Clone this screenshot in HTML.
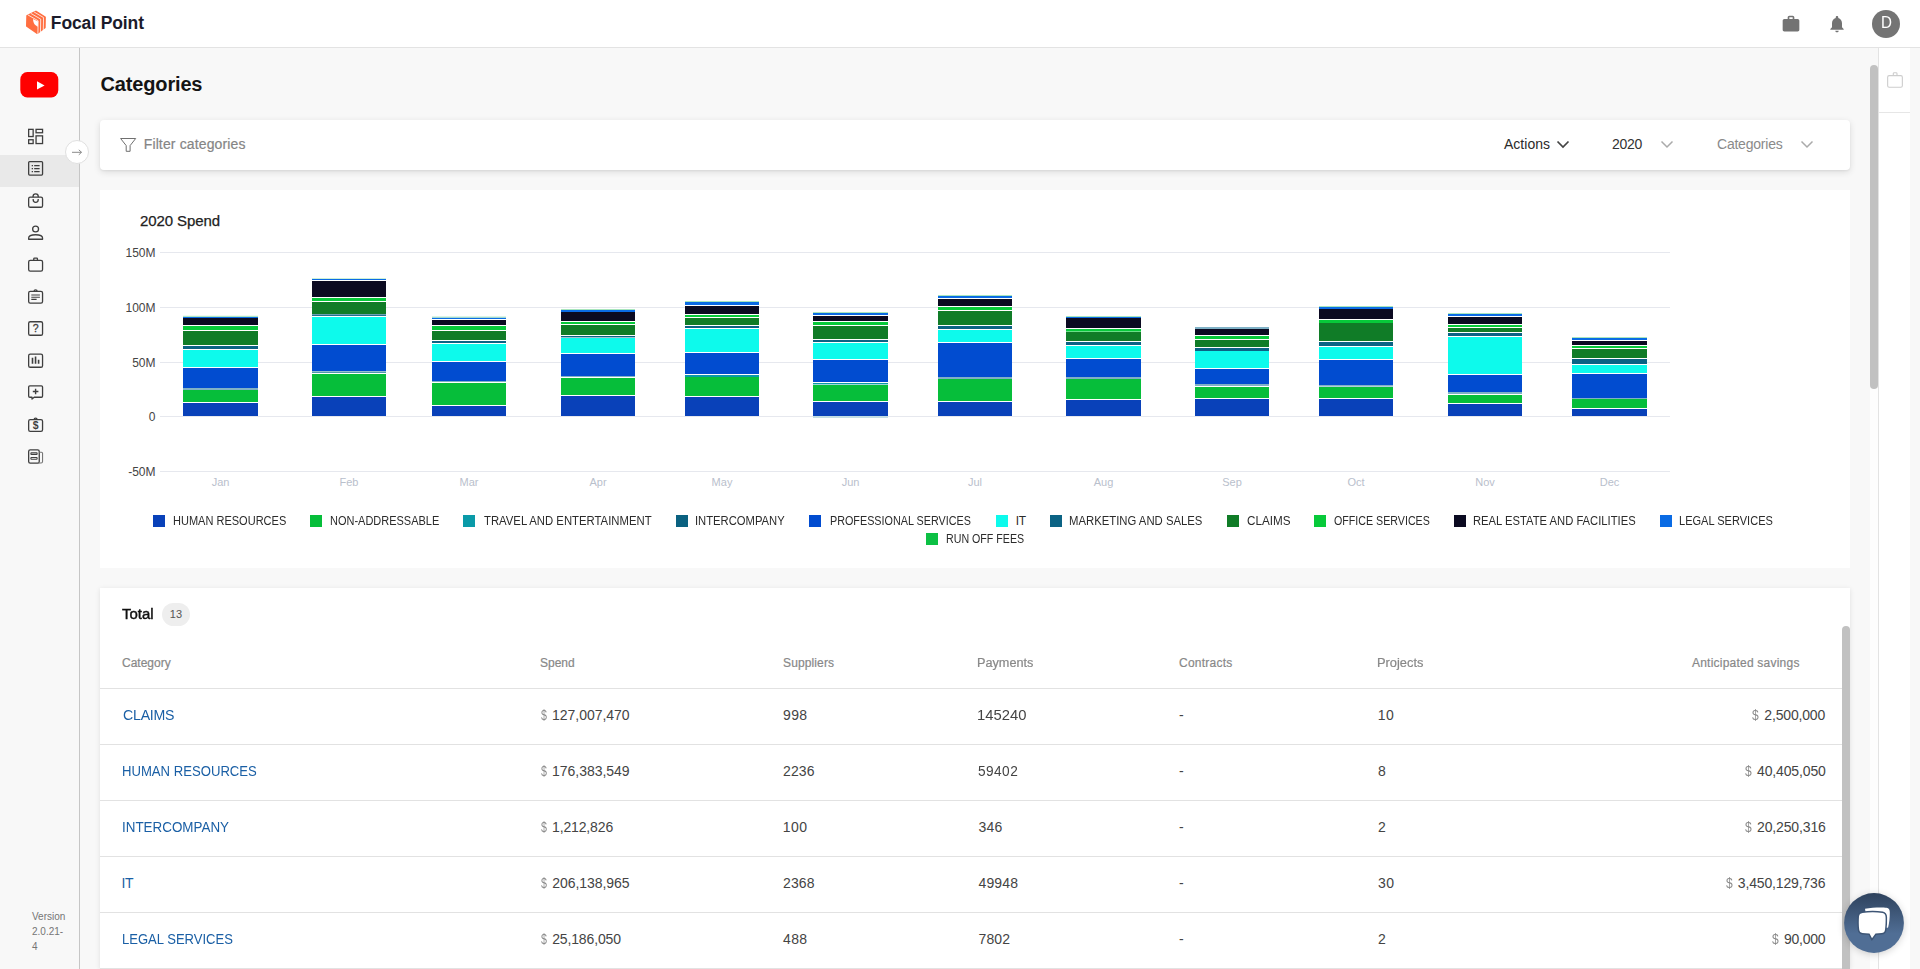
<!DOCTYPE html>
<html><head><meta charset="utf-8"><title>Categories</title>
<style>
*{box-sizing:border-box}
html,body{margin:0;padding:0}
body{width:1920px;height:969px;overflow:hidden;background:#f8f8f8;font-family:"Liberation Sans",sans-serif;position:relative}
.abs{position:absolute}
.t{position:absolute;white-space:nowrap;line-height:1.3}
.b{font-weight:bold}
.card{position:absolute;background:#fff}
</style></head><body>
<div class="abs" style="left:0;top:0;width:1920px;height:48px;background:#fff;border-bottom:1px solid #e3e3e3"></div>
<svg class="abs" style="left:20px;top:4px" width="40" height="38" viewBox="0 0 1020 969">
<path d="M185 300L405 195L635 338L630 598L445 742L178 560Z" fill="#ff6e40" stroke="#ff6e40" stroke-width="50" stroke-linejoin="round"/>
<g fill="none" stroke="#fff" stroke-width="21" stroke-linejoin="round" opacity=".95">
<path d="M197 276L463 428L456 768"/><path d="M277 240L528 386L521 730"/><path d="M360 204L601 346L594 672"/></g>
<path d="M334 384L460 448L454 578C392 548 334 505 334 384Z" fill="#fff"/>
</svg>
<div class="t b" style="left:50.8px;top:11.5px;font-size:17.5px;line-height:23px;color:#1b1b2b;letter-spacing:-0.11px;">Focal Point</div>
<svg class="abs" style="left:1781px;top:14px" width="20" height="20" viewBox="0 0 24 24" fill="#737373"><path d="M20 6h-4V4c0-1.110-.890-2-2-2h-4c-1.110 0-2 .890-2 2v2H4c-1.110 0-1.990.890-1.990 2L2 19c0 1.110.890 2 2 2h16c1.110 0 2-.890 2-2V8c0-1.110-.890-2-2-2zm-6 0h-4V4h4v2z"/></svg>
<svg class="abs" style="left:1827px;top:14px" width="20" height="20" viewBox="0 0 24 24" fill="#737373"><path d="M12 22c1.100 0 2-.900 2-2h-4c0 1.100.890 2 2 2zm6-6v-5c0-3.070-1.640-5.640-4.500-6.320V4c0-.830-.670-1.500-1.500-1.500s-1.500.670-1.500 1.500v.680C7.630 5.360 6 7.920 6 11v5l-2 2v1h16v-1l-2-2z"/></svg>
<div class="abs" style="left:1872px;top:10px;width:28px;height:28px;border-radius:50%;background:#747474"></div>
<div class="t " style="left:1880.7px;top:12.3px;font-size:17px;line-height:22px;color:#fff;letter-spacing:0.0px;transform:scaleX(0.8909);transform-origin:0 50%;">D</div>
<div class="abs" style="left:0;top:48px;width:80px;height:921px;background:#f8f8f8;border-right:1px solid #c6c6c6"></div>
<div class="abs" style="left:0;top:155px;width:79px;height:32px;background:#e9e9e9"></div>
<svg class="abs" style="left:18px;top:69px;filter:blur(.7px)" width="43" height="31" viewBox="18 69 43 31"><rect x="20.300" y="72" width="38" height="25.400" rx="7" ry="7.500" fill="#ff0000"/><path d="M37 81.300 L44.600 85.400 L37 89.600 Z" fill="#fff"/></svg>
<svg class="abs" style="left:0;top:120px" width="60" height="360" viewBox="0 120 60 360" fill="none" stroke="#3f3f3f" stroke-width="1.3" stroke-linejoin="round">
<!-- dashboard -->
<g stroke-linejoin="miter"><rect x="28.65" y="129.35" width="4.5" height="7.2"/><rect x="28.65" y="139.75" width="4.5" height="3.8"/><rect x="36.05" y="129.35" width="6.5" height="3.4"/><rect x="36.05" y="135.85" width="6.5" height="7.7"/></g>
<!-- list -->
<rect x="28.65" y="161.55" width="13.9" height="13.5" rx="1"/>
<path d="M31.7 165.6h1.3M31.7 168.6h1.3M31.7 171.7h1.3M34.2 165.6h5.4M34.2 168.6h5.4M34.2 171.7h5.4" stroke-width="1.2"/>
<!-- bag -->
<rect x="28.65" y="197.15" width="13.9" height="10.1" rx="1.6"/>
<path d="M33.05 197.15V196.45A2.6 2.6 0 0 1 38.25 196.45V197.15"/>
<path d="M33.2 199.1v.7a2.5 2.5 0 0 0 5 0v-.7"/>
<!-- person -->
<circle cx="35.6" cy="229" r="2.95"/>
<path d="M28.65 239.25V238C28.65 235.8 32.2 234.75 35.6 234.75S42.55 235.8 42.55 238V239.250Z"/>
<!-- work -->
<rect x="28.65" y="260.35" width="13.9" height="10.7" rx="1.6"/>
<path d="M33.75 260.35V258.85A.8 .8 0 0 1 34.55 258.05H36.65A.8 .8 0 0 1 37.45 258.85V260.35"/>
<!-- assignment -->
<rect x="28.65" y="291.35" width="13.9" height="11.7" rx="1.6"/>
<path d="M34.1 291.35A1.5 1.5 0 0 1 37.1 291.35"/>
<path d="M31.3 295h8.6M31.3 297.2h8.6M31.3 299.4h5.300" stroke-width="1.1"/>
<!-- help -->
<rect x="28.65" y="321.75" width="13.9" height="13.5" rx="1.6"/>
<text x="35.6" y="332.3" font-family="Liberation Sans" font-size="10.500" text-anchor="middle" fill="#3f3f3f" stroke="#3f3f3f" stroke-width=".3">?</text>
<!-- chart -->
<rect x="28.65" y="354.05" width="13.9" height="13.2" rx="1.6"/>
<path d="M32.5 357.8V363.8M35.55 356.6V363.8M38.6 359.8V363.8" stroke-width="1.6"/>
<!-- add comment -->
<path d="M29.85 385.85H41.35A1.2 1.2 0 0 1 42.55 387.05V396.05A1.2 1.2 0 0 1 41.35 397.25H34.2L32 399.100V397.250H29.850A1.2 1.2 0 0 1 28.65 396.05V387.05A1.2 1.2 0 0 1 29.85 385.85Z"/>
<path d="M35.6 388.7V394.3M32.8 391.5H38.4" stroke-width="1.4"/>
<!-- dollar -->
<rect x="28.65" y="419.65" width="13.9" height="11.7" rx="1.6"/>
<path d="M34.1 419.65A1.5 1.5 0 0 1 37.1 419.65"/>
<text x="35.6" y="429.3" font-family="Liberation Sans" font-weight="bold" font-size="10.500" text-anchor="middle" fill="#3f3f3f" stroke="none">$</text>
<!-- news -->
<rect x="28.65" y="449.85" width="10.6" height="13.2" rx="1.6"/>
<path d="M39.25 452.2H41.45A1.1 1.1 0 0 1 42.55 453.3V461.6A1.450 1.450 0 0 1 41.1 463.050H38" stroke="#777" stroke-width="1.1"/>
<rect x="30.9" y="452.7" width="6.2" height="1.7" rx=".5" stroke-width="1.1"/>
<rect x="30.9" y="457.5" width="6.2" height="1.7" rx=".5" stroke-width="1.1"/>
</svg>
<div class="abs" style="left:65.3px;top:140.1px;width:24.2px;height:24.2px;border-radius:50%;background:#fff;border:1px solid #e0e0e0"></div>
<svg class="abs" style="left:70px;top:146px" width="14" height="12" viewBox="70 146 14 12" fill="none" stroke="#8a8a8a" stroke-width="1"><path d="M72 152.3H81.5M78.8 149.8L81.5 152.3L78.8 154.8"/></svg>
<div class="t " style="left:32.0px;top:909.5px;font-size:10px;line-height:13px;color:#757575;letter-spacing:0.0px;">Version</div>
<div class="t " style="left:32.0px;top:924.5px;font-size:10px;line-height:13px;color:#757575;letter-spacing:0.0px;">2.0.21-</div>
<div class="t " style="left:32.0px;top:939.5px;font-size:10px;line-height:13px;color:#757575;letter-spacing:0.0px;">4</div>
<div class="abs" style="left:1878px;top:48px;width:32px;height:921px;background:#fff;border-left:1px solid #e3e3e3"></div>
<div class="abs" style="left:1879px;top:112px;width:31px;height:1px;background:#e6e6e6"></div>
<svg class="abs" style="left:1885px;top:70px" width="20" height="20" viewBox="1885 70 20 20" fill="none" stroke="#cdcdcd" stroke-width="1.1"><rect x="1887.650" y="75.650" width="14.700" height="11.600" rx="1.5"/><path d="M1893.300 75.600V73.600A.9 .9 0 0 1 1894.200 72.700H1896.100A.9 .9 0 0 1 1897 73.600V75.600"/></svg>
<div class="abs" style="left:1870px;top:388px;width:8px;height:581px;background:#fdfdfd"></div><div class="abs" style="left:1870px;top:64.500px;width:8px;height:324px;border-radius:4px;background:#c1c1c1"></div>
<div class="t b" style="left:100.6px;top:71.0px;font-size:20px;line-height:26px;color:#141414;letter-spacing:-0.167px;">Categories</div>
<div class="card" style="left:100px;top:120px;width:1750px;height:50px;border-radius:4px;box-shadow:0 2px 7px rgba(0,0,0,.12),0 1px 2px rgba(0,0,0,.05)"></div>
<svg class="abs" style="left:118px;top:136px" width="20" height="18" viewBox="118 136 20 18" fill="none" stroke="#6f6f6f" stroke-width="1" stroke-linejoin="round"><path d="M120.600 138.500H135.700L130.100 145.600V151.300H126.200V145.600Z"/></svg>
<div class="t " style="left:143.7px;top:135.0px;font-size:14px;line-height:18px;color:#858585;letter-spacing:0.138px;-webkit-text-stroke:.2px #858585;">Filter categories</div>
<div class="t " style="left:1504.0px;top:135.0px;font-size:14px;line-height:18px;color:#2a2a2a;letter-spacing:0.016px;">Actions</div>
<svg class="abs" style="left:1556px;top:139px" width="14" height="11" viewBox="0 0 14 11" fill="none" stroke="#444" stroke-width="1.700"><path d="M1.500 2.500L7 8L12.500 2.500"/></svg>
<div class="t " style="left:1612.0px;top:135.0px;font-size:14px;line-height:18px;color:#333;letter-spacing:-0.3px;">2020</div>
<svg class="abs" style="left:1660px;top:139px" width="14" height="11" viewBox="0 0 14 11" fill="none" stroke="#aaa" stroke-width="1.500"><path d="M1.500 2.500L7 8L12.500 2.500"/></svg>
<div class="t " style="left:1717.0px;top:135.0px;font-size:14px;line-height:18px;color:#8a8a8a;letter-spacing:-0.222px;">Categories</div>
<svg class="abs" style="left:1800px;top:139px" width="14" height="11" viewBox="0 0 14 11" fill="none" stroke="#aaa" stroke-width="1.500"><path d="M1.500 2.500L7 8L12.500 2.500"/></svg>
<div class="card" style="left:100px;top:190px;width:1750px;height:378px"></div>
<div class="t " style="left:140.0px;top:211.0px;font-size:15px;line-height:20px;color:#222;letter-spacing:-0.089px;-webkit-text-stroke:.25px #222;">2020 Spend</div>
<svg class="abs" style="left:100px;top:190px" width="1750" height="378" viewBox="100 190 1750 378">
<rect x="160" y="252" width="1510" height="1" fill="#e6e8ee"/>
<rect x="160" y="307" width="1510" height="1" fill="#e6e8ee"/>
<rect x="160" y="362" width="1510" height="1" fill="#e6e8ee"/>
<rect x="160" y="416" width="1510" height="1" fill="#e6e8ee"/>
<rect x="160" y="471" width="1510" height="1" fill="#e6e8ee"/>
<rect x="183" y="403" width="75" height="13" fill="#0941b9"/>
<rect x="183" y="390" width="75" height="12" fill="#06be3a"/>
<rect x="183" y="388" width="75" height="2" fill="#7fb1c6"/>
<rect x="183" y="368" width="75" height="20" fill="#014cd0"/>
<rect x="183" y="350" width="75" height="17" fill="#0dfaec"/>
<rect x="183" y="346" width="75" height="3" fill="#0b6384"/>
<rect x="183" y="331" width="75" height="14" fill="#107c27"/>
<rect x="183" y="326" width="75" height="4" fill="#07ca3a"/>
<rect x="183" y="318" width="75" height="7" fill="#0b0a21"/>
<rect x="183" y="316.9" width="75" height="1.1" fill="#0a6be4"/>
<rect x="183" y="315.8" width="75" height="1.1" fill="#a9e6bd"/>
<rect x="312" y="397" width="74" height="19" fill="#0941b9"/>
<rect x="312" y="374" width="74" height="22" fill="#06be3a"/>
<rect x="312" y="371.4" width="74" height="1.6" fill="#4f97ad"/>
<rect x="312" y="345" width="74" height="26" fill="#014cd0"/>
<rect x="312" y="317" width="74" height="27" fill="#0dfaec"/>
<rect x="312" y="314.4" width="74" height="1.5" fill="#0b6384"/>
<rect x="312" y="302" width="74" height="12" fill="#107c27"/>
<rect x="312" y="298" width="74" height="3" fill="#07ca3a"/>
<rect x="312" y="281" width="74" height="16" fill="#0b0a21"/>
<rect x="312" y="279" width="74" height="1" fill="#0a6be4"/>
<rect x="312" y="278.4" width="74" height="0.6" fill="#a9e6bd"/>
<rect x="432" y="406" width="74" height="10" fill="#0941b9"/>
<rect x="432" y="383" width="74" height="22" fill="#06be3a"/>
<rect x="432" y="381" width="74" height="1" fill="#7fb1c6"/>
<rect x="432" y="362" width="74" height="19" fill="#014cd0"/>
<rect x="432" y="344" width="74" height="17" fill="#0dfaec"/>
<rect x="432" y="341" width="74" height="2" fill="#0b6384"/>
<rect x="432" y="331" width="74" height="9" fill="#107c27"/>
<rect x="432" y="326" width="74" height="4" fill="#07ca3a"/>
<rect x="432" y="320" width="74" height="5" fill="#0b0a21"/>
<rect x="432" y="317.6" width="74" height="1.4" fill="#0a6be4"/>
<rect x="432" y="316.6" width="74" height="1.0" fill="#a9e6bd"/>
<rect x="561" y="396" width="74" height="20" fill="#0941b9"/>
<rect x="561" y="378" width="74" height="17" fill="#06be3a"/>
<rect x="561" y="376" width="74" height="1" fill="#7fb1c6"/>
<rect x="561" y="354" width="74" height="22" fill="#014cd0"/>
<rect x="561" y="338" width="74" height="15" fill="#0dfaec"/>
<rect x="561" y="336" width="74" height="1.4" fill="#0b6384"/>
<rect x="561" y="325" width="74" height="10" fill="#107c27"/>
<rect x="561" y="322" width="74" height="2" fill="#07ca3a"/>
<rect x="561" y="312" width="74" height="9" fill="#0b0a21"/>
<rect x="561" y="310" width="74" height="2" fill="#0a6be4"/>
<rect x="561" y="309" width="74" height="1" fill="#a9e6bd"/>
<rect x="685" y="397" width="74" height="19" fill="#0941b9"/>
<rect x="685" y="377" width="74" height="19" fill="#06be3a"/>
<rect x="685" y="375" width="74" height="2" fill="#0a9aa8"/>
<rect x="685" y="353" width="74" height="21" fill="#014cd0"/>
<rect x="685" y="329" width="74" height="23" fill="#0dfaec"/>
<rect x="685" y="326" width="74" height="2" fill="#0b6384"/>
<rect x="685" y="318" width="74" height="7" fill="#107c27"/>
<rect x="685" y="315" width="74" height="2" fill="#07ca3a"/>
<rect x="685" y="306" width="74" height="8" fill="#0b0a21"/>
<rect x="685" y="302" width="74" height="3" fill="#0a6be4"/>
<rect x="685" y="301" width="74" height="1" fill="#a9e6bd"/>
<rect x="813" y="416" width="75" height="2" fill="#c3dde4"/>
<rect x="813" y="402" width="75" height="14" fill="#0941b9"/>
<rect x="813" y="385" width="75" height="16" fill="#06be3a"/>
<rect x="813" y="383" width="75" height="1.4" fill="#0a9aa8"/>
<rect x="813" y="360" width="75" height="22" fill="#014cd0"/>
<rect x="813" y="343" width="75" height="16" fill="#0dfaec"/>
<rect x="813" y="340" width="75" height="2" fill="#0b6384"/>
<rect x="813" y="326" width="75" height="13" fill="#107c27"/>
<rect x="813" y="322" width="75" height="3" fill="#07ca3a"/>
<rect x="813" y="316" width="75" height="5" fill="#0b0a21"/>
<rect x="813" y="313" width="75" height="2" fill="#0a6be4"/>
<rect x="813" y="312" width="75" height="1" fill="#a9e6bd"/>
<rect x="938" y="402" width="74" height="14" fill="#0941b9"/>
<rect x="938" y="379" width="74" height="22" fill="#06be3a"/>
<rect x="938" y="377" width="74" height="2" fill="#7fb1c6"/>
<rect x="938" y="343" width="74" height="34" fill="#014cd0"/>
<rect x="938" y="330" width="74" height="12" fill="#0dfaec"/>
<rect x="938" y="326" width="74" height="3" fill="#0b6384"/>
<rect x="938" y="311" width="74" height="14" fill="#107c27"/>
<rect x="938" y="307" width="74" height="3" fill="#07ca3a"/>
<rect x="938" y="299" width="74" height="7" fill="#0b0a21"/>
<rect x="938" y="296" width="74" height="2" fill="#0a6be4"/>
<rect x="938" y="295" width="74" height="1" fill="#a9e6bd"/>
<rect x="1066" y="400" width="75" height="16" fill="#0941b9"/>
<rect x="1066" y="379" width="75" height="20" fill="#06be3a"/>
<rect x="1066" y="377" width="75" height="2" fill="#7fb1c6"/>
<rect x="1066" y="359" width="75" height="18" fill="#014cd0"/>
<rect x="1066" y="346" width="75" height="12" fill="#0dfaec"/>
<rect x="1066" y="342" width="75" height="3" fill="#0b6384"/>
<rect x="1066" y="332" width="75" height="9" fill="#107c27"/>
<rect x="1066" y="329" width="75" height="2.6" fill="#07ca3a"/>
<rect x="1066" y="318" width="75" height="10" fill="#0b0a21"/>
<rect x="1066" y="317" width="75" height="1" fill="#0a6be4"/>
<rect x="1066" y="316" width="75" height="1" fill="#a9e6bd"/>
<rect x="1195" y="399" width="74" height="17" fill="#0941b9"/>
<rect x="1195" y="387" width="74" height="11" fill="#06be3a"/>
<rect x="1195" y="384" width="74" height="2" fill="#7fb1c6"/>
<rect x="1195" y="369" width="74" height="15" fill="#014cd0"/>
<rect x="1195" y="351" width="74" height="17" fill="#0dfaec"/>
<rect x="1195" y="348" width="74" height="3" fill="#0b6384"/>
<rect x="1195" y="340" width="74" height="7" fill="#107c27"/>
<rect x="1195" y="336" width="74" height="3" fill="#07ca3a"/>
<rect x="1195" y="329" width="74" height="6" fill="#0b0a21"/>
<rect x="1195" y="327" width="74" height="2" fill="#7fb1c6"/>
<rect x="1319" y="399" width="74" height="17" fill="#0941b9"/>
<rect x="1319" y="387" width="74" height="11" fill="#06be3a"/>
<rect x="1319" y="385" width="74" height="1.6" fill="#7fb1c6"/>
<rect x="1319" y="360" width="74" height="25" fill="#014cd0"/>
<rect x="1319" y="347" width="74" height="12" fill="#0dfaec"/>
<rect x="1319" y="342" width="74" height="4" fill="#0b6384"/>
<rect x="1319" y="323" width="74" height="18" fill="#107c27"/>
<rect x="1319" y="320" width="74" height="3" fill="#07ca3a"/>
<rect x="1319" y="309" width="74" height="10" fill="#0b0a21"/>
<rect x="1319" y="307" width="74" height="2" fill="#0a6be4"/>
<rect x="1319" y="306" width="74" height="1" fill="#a9e6bd"/>
<rect x="1448" y="404" width="74" height="12" fill="#0941b9"/>
<rect x="1448" y="395" width="74" height="8" fill="#06be3a"/>
<rect x="1448" y="392" width="74" height="2" fill="#7fb1c6"/>
<rect x="1448" y="375" width="74" height="17" fill="#014cd0"/>
<rect x="1448" y="337" width="74" height="37" fill="#0dfaec"/>
<rect x="1448" y="333" width="74" height="3" fill="#0b6384"/>
<rect x="1448" y="328" width="74" height="4" fill="#107c27"/>
<rect x="1448" y="325" width="74" height="2" fill="#07ca3a"/>
<rect x="1448" y="317" width="74" height="7" fill="#0b0a21"/>
<rect x="1448" y="314" width="74" height="2" fill="#0a6be4"/>
<rect x="1448" y="313" width="74" height="1" fill="#a9e6bd"/>
<rect x="1572" y="409" width="75" height="7" fill="#0941b9"/>
<rect x="1572" y="399" width="75" height="9" fill="#06be3a"/>
<rect x="1572" y="398" width="75" height="1" fill="#7fb1c6"/>
<rect x="1572" y="374" width="75" height="24" fill="#014cd0"/>
<rect x="1572" y="365" width="75" height="8" fill="#0dfaec"/>
<rect x="1572" y="359" width="75" height="5" fill="#0b6384"/>
<rect x="1572" y="349" width="75" height="9" fill="#107c27"/>
<rect x="1572" y="346" width="75" height="2" fill="#07ca3a"/>
<rect x="1572" y="341" width="75" height="4" fill="#0b0a21"/>
<rect x="1572" y="338" width="75" height="2" fill="#0a6be4"/>
<rect x="1572" y="337" width="75" height="1" fill="#a9e6bd"/>
</svg>
<div class="t" style="right:1764.5px;top:245px;font-size:12px;line-height:16px;color:#444">150M</div>
<div class="t" style="right:1764.5px;top:300px;font-size:12px;line-height:16px;color:#444">100M</div>
<div class="t" style="right:1764.5px;top:355px;font-size:12px;line-height:16px;color:#444">50M</div>
<div class="t" style="right:1764.5px;top:409px;font-size:12px;line-height:16px;color:#444">0</div>
<div class="t" style="right:1764.5px;top:464px;font-size:12px;line-height:16px;color:#444">-50M</div>
<div class="t" style="left:200.5px;width:40px;text-align:center;top:475px;font-size:11px;line-height:14px;color:#b9c0cc">Jan</div>
<div class="t" style="left:329.0px;width:40px;text-align:center;top:475px;font-size:11px;line-height:14px;color:#b9c0cc">Feb</div>
<div class="t" style="left:449.0px;width:40px;text-align:center;top:475px;font-size:11px;line-height:14px;color:#b9c0cc">Mar</div>
<div class="t" style="left:578.0px;width:40px;text-align:center;top:475px;font-size:11px;line-height:14px;color:#b9c0cc">Apr</div>
<div class="t" style="left:702.0px;width:40px;text-align:center;top:475px;font-size:11px;line-height:14px;color:#b9c0cc">May</div>
<div class="t" style="left:830.5px;width:40px;text-align:center;top:475px;font-size:11px;line-height:14px;color:#b9c0cc">Jun</div>
<div class="t" style="left:955.0px;width:40px;text-align:center;top:475px;font-size:11px;line-height:14px;color:#b9c0cc">Jul</div>
<div class="t" style="left:1083.5px;width:40px;text-align:center;top:475px;font-size:11px;line-height:14px;color:#b9c0cc">Aug</div>
<div class="t" style="left:1212.0px;width:40px;text-align:center;top:475px;font-size:11px;line-height:14px;color:#b9c0cc">Sep</div>
<div class="t" style="left:1336.0px;width:40px;text-align:center;top:475px;font-size:11px;line-height:14px;color:#b9c0cc">Oct</div>
<div class="t" style="left:1465.0px;width:40px;text-align:center;top:475px;font-size:11px;line-height:14px;color:#b9c0cc">Nov</div>
<div class="t" style="left:1589.5px;width:40px;text-align:center;top:475px;font-size:11px;line-height:14px;color:#b9c0cc">Dec</div>
<div class="abs" style="left:153px;top:515px;width:12px;height:12px;background:#0941b9"></div>
<div class="t " style="left:173.08px;top:513.0px;font-size:12px;line-height:16px;color:#2b2b2b;letter-spacing:0.0px;transform:scaleX(0.918);transform-origin:0 50%;">HUMAN RESOURCES</div>
<div class="abs" style="left:310px;top:515px;width:12px;height:12px;background:#06be3a"></div>
<div class="t " style="left:330.08px;top:513.0px;font-size:12px;line-height:16px;color:#2b2b2b;letter-spacing:0.0px;transform:scaleX(0.9153);transform-origin:0 50%;">NON-ADDRESSABLE</div>
<div class="abs" style="left:463px;top:515px;width:12px;height:12px;background:#0a9aa8"></div>
<div class="t " style="left:484.0px;top:513.0px;font-size:12px;line-height:16px;color:#2b2b2b;letter-spacing:0.0px;transform:scaleX(0.9435);transform-origin:0 50%;">TRAVEL AND ENTERTAINMENT</div>
<div class="abs" style="left:676px;top:515px;width:12px;height:12px;background:#0a6180"></div>
<div class="t " style="left:695.06px;top:513.0px;font-size:12px;line-height:16px;color:#2b2b2b;letter-spacing:0.0px;transform:scaleX(0.9368);transform-origin:0 50%;">INTERCOMPANY</div>
<div class="abs" style="left:809px;top:515px;width:12px;height:12px;background:#014cd0"></div>
<div class="t " style="left:829.9px;top:513.0px;font-size:12px;line-height:16px;color:#2b2b2b;letter-spacing:0.0px;transform:scaleX(0.8987);transform-origin:0 50%;">PROFESSIONAL SERVICES</div>
<div class="abs" style="left:996px;top:515px;width:12px;height:12px;background:#0dfaec"></div>
<div class="t " style="left:1015.8px;top:513.0px;font-size:12px;line-height:16px;color:#2b2b2b;letter-spacing:-0.5px;">IT</div>
<div class="abs" style="left:1050px;top:515px;width:12px;height:12px;background:#0b6384"></div>
<div class="t " style="left:1069.05px;top:513.0px;font-size:12px;line-height:16px;color:#2b2b2b;letter-spacing:0.0px;transform:scaleX(0.9438);transform-origin:0 50%;">MARKETING AND SALES</div>
<div class="abs" style="left:1227px;top:515px;width:12px;height:12px;background:#107c27"></div>
<div class="t " style="left:1247.0px;top:513.0px;font-size:12px;line-height:16px;color:#2b2b2b;letter-spacing:0.0px;transform:scaleX(0.9738);transform-origin:0 50%;">CLAIMS</div>
<div class="abs" style="left:1314px;top:515px;width:12px;height:12px;background:#07ca3a"></div>
<div class="t " style="left:1334.0px;top:513.0px;font-size:12px;line-height:16px;color:#2b2b2b;letter-spacing:0.0px;transform:scaleX(0.8889);transform-origin:0 50%;">OFFICE SERVICES</div>
<div class="abs" style="left:1454px;top:515px;width:12px;height:12px;background:#0b0a21"></div>
<div class="t " style="left:1473.17px;top:513.0px;font-size:12px;line-height:16px;color:#2b2b2b;letter-spacing:0.0px;transform:scaleX(0.9358);transform-origin:0 50%;">REAL ESTATE AND FACILITIES</div>
<div class="abs" style="left:1660px;top:515px;width:12px;height:12px;background:#0a6be4"></div>
<div class="t " style="left:1679.08px;top:513.0px;font-size:12px;line-height:16px;color:#2b2b2b;letter-spacing:0.0px;transform:scaleX(0.9198);transform-origin:0 50%;">LEGAL SERVICES</div>
<div class="abs" style="left:926px;top:533px;width:12px;height:12px;background:#0cc044"></div>
<div class="t " style="left:945.9px;top:531.0px;font-size:12px;line-height:16px;color:#2b2b2b;letter-spacing:0.0px;transform:scaleX(0.8875);transform-origin:0 50%;">RUN OFF FEES</div>
<div class="card" style="left:100px;top:588px;width:1750px;height:381px;box-shadow:0 1px 5px rgba(0,0,0,.10)"></div>
<div class="t " style="left:122.0px;top:605.0px;font-size:14px;line-height:18px;color:#111;letter-spacing:0.0px;-webkit-text-stroke:.4px #111;transform:scaleX(1.069);transform-origin:0 50%;">Total</div>
<div class="abs" style="left:162px;top:603px;width:28px;height:23px;border-radius:12px;background:#eeeeee"></div>
<div class="t " style="left:169.8px;top:607.0px;font-size:11px;line-height:14px;color:#555;letter-spacing:0.0px;">13</div>
<div class="t " style="left:122.0px;top:655.0px;font-size:12px;line-height:16px;color:#888;letter-spacing:0.0px;-webkit-text-stroke:.2px #888;">Category</div>
<div class="t " style="left:540.0px;top:655.0px;font-size:12px;line-height:16px;color:#888;letter-spacing:0.0px;-webkit-text-stroke:.2px #888;">Spend</div>
<div class="t " style="left:783.0px;top:655.0px;font-size:12px;line-height:16px;color:#888;letter-spacing:0.125px;-webkit-text-stroke:.2px #888;">Suppliers</div>
<div class="t " style="left:976.94px;top:655.0px;font-size:12px;line-height:16px;color:#888;letter-spacing:0.0px;-webkit-text-stroke:.2px #888;transform:scaleX(1.0577);transform-origin:0 50%;">Payments</div>
<div class="t " style="left:1179.0px;top:655.0px;font-size:12px;line-height:16px;color:#888;letter-spacing:0.25px;-webkit-text-stroke:.2px #888;">Contracts</div>
<div class="t " style="left:1376.93px;top:655.0px;font-size:12px;line-height:16px;color:#888;letter-spacing:0.0px;-webkit-text-stroke:.2px #888;transform:scaleX(1.0714);transform-origin:0 50%;">Projects</div>
<div class="t " style="left:1692.0px;top:655.0px;font-size:12px;line-height:16px;color:#888;letter-spacing:0.222px;-webkit-text-stroke:.2px #888;">Anticipated savings</div>
<div class="abs" style="left:100px;top:688px;width:1742px;height:1px;background:#e2e2e2"></div>
<div class="abs" style="left:100px;top:744px;width:1742px;height:1px;background:#e2e2e2"></div>
<div class="abs" style="left:100px;top:800px;width:1742px;height:1px;background:#e2e2e2"></div>
<div class="abs" style="left:100px;top:856px;width:1742px;height:1px;background:#e2e2e2"></div>
<div class="abs" style="left:100px;top:912px;width:1742px;height:1px;background:#e2e2e2"></div>
<div class="abs" style="left:100px;top:968px;width:1742px;height:1px;background:#e2e2e2"></div>
<div class="t " style="left:122.5px;top:706.0px;font-size:14px;line-height:18px;color:#1a5fa5;letter-spacing:-0.216px;transform:scaleX(1.01);transform-origin:0 50%;">CLAIMS</div>
<div class="t " style="left:540.7px;top:706.0px;font-size:14px;line-height:18px;color:#8a8a8a;letter-spacing:0.0px;transform:scaleX(0.7598);transform-origin:0 50%;">$</div>
<div class="t " style="left:552.0px;top:706.0px;font-size:14px;line-height:18px;color:#444;letter-spacing:-0.03px;">127,007,470</div>
<div class="t " style="left:783.0px;top:706.0px;font-size:14px;line-height:18px;color:#444;letter-spacing:0.35px;">998</div>
<div class="t " style="left:977.36px;top:706.0px;font-size:14px;line-height:18px;color:#444;letter-spacing:0.0px;transform:scaleX(1.0569);transform-origin:0 50%;">145240</div>
<div class="t " style="left:1178.9px;top:706.0px;font-size:14px;line-height:18px;color:#444;letter-spacing:0.0px;">-</div>
<div class="t " style="left:1377.8px;top:706.0px;font-size:14px;line-height:18px;color:#444;letter-spacing:0.5px;">10</div>
<div class="t " style="left:1752.3px;top:706.0px;font-size:14px;line-height:18px;color:#8a8a8a;letter-spacing:0.0px;transform:scaleX(0.8597);transform-origin:0 50%;">$</div>
<div class="t " style="left:1764.3px;top:706.0px;font-size:14px;line-height:18px;color:#444;letter-spacing:-0.163px;">2,500,000</div>
<div class="t " style="left:121.67px;top:762.0px;font-size:14px;line-height:18px;color:#1a5fa5;letter-spacing:0.0px;transform:scaleX(0.937);transform-origin:0 50%;">HUMAN RESOURCES</div>
<div class="t " style="left:540.7px;top:762.0px;font-size:14px;line-height:18px;color:#8a8a8a;letter-spacing:0.0px;transform:scaleX(0.7598);transform-origin:0 50%;">$</div>
<div class="t " style="left:552.0px;top:762.0px;font-size:14px;line-height:18px;color:#444;letter-spacing:-0.03px;">176,383,549</div>
<div class="t " style="left:783.0px;top:762.0px;font-size:14px;line-height:18px;color:#444;letter-spacing:0.1px;">2236</div>
<div class="t " style="left:978.4px;top:762.0px;font-size:14px;line-height:18px;color:#444;letter-spacing:0.44px;transform:scaleX(0.9766);transform-origin:0 50%;">59402</div>
<div class="t " style="left:1178.9px;top:762.0px;font-size:14px;line-height:18px;color:#444;letter-spacing:0.0px;">-</div>
<div class="t " style="left:1378.0px;top:762.0px;font-size:14px;line-height:18px;color:#444;letter-spacing:0.0px;">8</div>
<div class="t " style="left:1745.0px;top:762.0px;font-size:14px;line-height:18px;color:#8a8a8a;letter-spacing:0.0px;transform:scaleX(0.8597);transform-origin:0 50%;">$</div>
<div class="t " style="left:1757.0px;top:762.0px;font-size:14px;line-height:18px;color:#444;letter-spacing:-0.134px;">40,405,050</div>
<div class="t " style="left:121.65px;top:818.0px;font-size:14px;line-height:18px;color:#1a5fa5;letter-spacing:0.0px;transform:scaleX(0.9578);transform-origin:0 50%;">INTERCOMPANY</div>
<div class="t " style="left:540.7px;top:818.0px;font-size:14px;line-height:18px;color:#8a8a8a;letter-spacing:0.0px;transform:scaleX(0.7598);transform-origin:0 50%;">$</div>
<div class="t " style="left:552.0px;top:818.0px;font-size:14px;line-height:18px;color:#444;letter-spacing:-0.138px;">1,212,826</div>
<div class="t " style="left:782.8px;top:818.0px;font-size:14px;line-height:18px;color:#444;letter-spacing:0.5px;">100</div>
<div class="t " style="left:978.4px;top:818.0px;font-size:14px;line-height:18px;color:#444;letter-spacing:0.3px;">346</div>
<div class="t " style="left:1178.9px;top:818.0px;font-size:14px;line-height:18px;color:#444;letter-spacing:0.0px;">-</div>
<div class="t " style="left:1378.0px;top:818.0px;font-size:14px;line-height:18px;color:#444;letter-spacing:0.0px;">2</div>
<div class="t " style="left:1745.0px;top:818.0px;font-size:14px;line-height:18px;color:#8a8a8a;letter-spacing:0.0px;transform:scaleX(0.8597);transform-origin:0 50%;">$</div>
<div class="t " style="left:1757.0px;top:818.0px;font-size:14px;line-height:18px;color:#444;letter-spacing:-0.134px;">20,250,316</div>
<div class="t " style="left:121.6px;top:874.0px;font-size:14px;line-height:18px;color:#1a5fa5;letter-spacing:-0.5px;">IT</div>
<div class="t " style="left:540.7px;top:874.0px;font-size:14px;line-height:18px;color:#8a8a8a;letter-spacing:0.0px;transform:scaleX(0.7598);transform-origin:0 50%;">$</div>
<div class="t " style="left:552.2px;top:874.0px;font-size:14px;line-height:18px;color:#444;letter-spacing:-0.05px;">206,138,965</div>
<div class="t " style="left:783.0px;top:874.0px;font-size:14px;line-height:18px;color:#444;letter-spacing:0.1px;">2368</div>
<div class="t " style="left:978.4px;top:874.0px;font-size:14px;line-height:18px;color:#444;letter-spacing:0.2px;">49948</div>
<div class="t " style="left:1178.9px;top:874.0px;font-size:14px;line-height:18px;color:#444;letter-spacing:0.0px;">-</div>
<div class="t " style="left:1378.0px;top:874.0px;font-size:14px;line-height:18px;color:#444;letter-spacing:0.5px;">30</div>
<div class="t " style="left:1725.8px;top:874.0px;font-size:14px;line-height:18px;color:#8a8a8a;letter-spacing:0.0px;transform:scaleX(0.8597);transform-origin:0 50%;">$</div>
<div class="t " style="left:1737.8px;top:874.0px;font-size:14px;line-height:18px;color:#444;letter-spacing:-0.15px;">3,450,129,736</div>
<div class="t " style="left:121.67px;top:930.0px;font-size:14px;line-height:18px;color:#1a5fa5;letter-spacing:0.0px;transform:scaleX(0.9314);transform-origin:0 50%;">LEGAL SERVICES</div>
<div class="t " style="left:540.7px;top:930.0px;font-size:14px;line-height:18px;color:#8a8a8a;letter-spacing:0.0px;transform:scaleX(0.7598);transform-origin:0 50%;">$</div>
<div class="t " style="left:552.2px;top:930.0px;font-size:14px;line-height:18px;color:#444;letter-spacing:-0.144px;">25,186,050</div>
<div class="t " style="left:783.0px;top:930.0px;font-size:14px;line-height:18px;color:#444;letter-spacing:0.35px;">488</div>
<div class="t " style="left:978.4px;top:930.0px;font-size:14px;line-height:18px;color:#444;letter-spacing:0.199px;">7802</div>
<div class="t " style="left:1178.9px;top:930.0px;font-size:14px;line-height:18px;color:#444;letter-spacing:0.0px;">-</div>
<div class="t " style="left:1378.0px;top:930.0px;font-size:14px;line-height:18px;color:#444;letter-spacing:0.0px;">2</div>
<div class="t " style="left:1772.0px;top:930.0px;font-size:14px;line-height:18px;color:#8a8a8a;letter-spacing:0.0px;transform:scaleX(0.8597);transform-origin:0 50%;">$</div>
<div class="t " style="left:1784.0px;top:930.0px;font-size:14px;line-height:18px;color:#444;letter-spacing:-0.24px;">90,000</div>
<div class="abs" style="left:1842px;top:626px;width:8px;height:360px;border-radius:4px;background:#c1c1c1"></div>
<svg class="abs" style="left:1830px;top:880px;overflow:visible" width="90" height="89" viewBox="1830 880 90 89">
<defs><linearGradient id="cg" x1="0" y1="0" x2="0" y2="1"><stop offset="0" stop-color="#2e425d"/><stop offset=".68" stop-color="#506e95"/><stop offset="1" stop-color="#506e95"/></linearGradient>
<filter id="cs" x="-30%" y="-30%" width="160%" height="160%"><feGaussianBlur stdDeviation="4"/></filter></defs>
<circle cx="1874" cy="924.500" r="29" fill="#000" opacity=".22" filter="url(#cs)"/>
<circle cx="1874" cy="923" r="29.900" fill="url(#cg)"/>
<path d="M1865 908.700C1872 907.500 1882 907.200 1886.500 907.800C1889 908.200 1889.800 909.800 1889.800 912.500C1889.800 918 1889.200 923.500 1888.200 927C1887.900 927.900 1887.300 928 1886.600 927.700L1880 925L1866 915Z" fill="#fff"/>
<path d="M1862.500 912.900C1869 912.100 1876.500 912.100 1882.500 912.900C1884.800 913.300 1885.600 914.800 1885.600 917.500C1885.700 921.500 1885.500 926 1885 929.800C1884.700 932 1883.500 932.900 1881.500 933.100C1879.500 933.300 1877.500 933.400 1875.500 933.400L1872 938.200L1869.500 933.400C1866.800 933.400 1864.500 933.200 1862.500 933C1860.300 932.700 1859.500 931.500 1859.200 929.500C1858.700 925.500 1858.700 920.500 1859 916.500C1859.200 914.300 1860.300 913.200 1862.500 912.900Z" fill="none" stroke="#3d5575" stroke-width="3"/>
<path d="M1862.500 912.900C1869 912.100 1876.500 912.100 1882.500 912.900C1884.800 913.300 1885.600 914.800 1885.600 917.500C1885.700 921.500 1885.500 926 1885 929.800C1884.700 932 1883.500 932.900 1881.500 933.100C1879.500 933.300 1877.500 933.400 1875.500 933.400L1872 938.200L1869.500 933.400C1866.800 933.400 1864.500 933.200 1862.500 933C1860.300 932.700 1859.500 931.500 1859.200 929.500C1858.700 925.500 1858.700 920.500 1859 916.500C1859.200 914.300 1860.300 913.200 1862.500 912.900Z" fill="#fff"/>
</svg>
</body></html>
